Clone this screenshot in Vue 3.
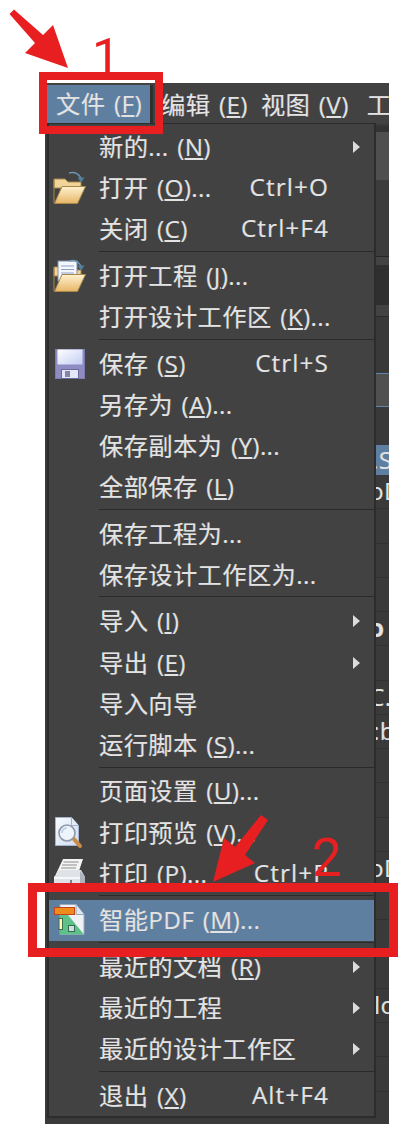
<script setup>
const barItems = [
  { t: "编辑 (", k: "E", a: ")" },
  { t: "视图 (", k: "V", a: ")" },
  { t: "工", k: "", a: "" },
];

// null = separator line
const menu = [
  { t: "新的... (", k: "N", a: ")", sub: true },
  { t: "打开 (", k: "O", a: ")...", key: "Ctrl+O", icon: "open" },
  { t: "关闭 (", k: "C", a: ")", key: "Ctrl+F4" },
  null,
  { t: "打开工程 (", k: "J", a: ")...", icon: "project" },
  { t: "打开设计工作区 (", k: "K", a: ")..." },
  null,
  { t: "保存 (", k: "S", a: ")", key: "Ctrl+S", icon: "save" },
  { t: "另存为 (", k: "A", a: ")..." },
  { t: "保存副本为 (", k: "Y", a: ")..." },
  { t: "全部保存 (", k: "L", a: ")" },
  null,
  { t: "保存工程为..." },
  { t: "保存设计工作区为..." },
  null,
  { t: "导入 (", k: "I", a: ")", sub: true },
  { t: "导出 (", k: "E", a: ")", sub: true },
  { t: "导入向导" },
  { t: "运行脚本 (", k: "S", a: ")..." },
  null,
  { t: "页面设置 (", k: "U", a: ")..." },
  { t: "打印预览 (", k: "V", a: ")...", icon: "preview" },
  { t: "打印 (", k: "P", a: ")...", key: "Ctrl+P", icon: "print" },
  null,
  { t: "智能PDF (", k: "M", a: ")...", icon: "pdf", active: true },
  null,
  { t: "最近的文档 (", k: "R", a: ")", sub: true },
  { t: "最近的工程", sub: true },
  { t: "最近的设计工作区", sub: true },
  null,
  { t: "退出 (", k: "X", a: ")", key: "Alt+F4" },
];

// the bit of the panel that shows to the right of the open menu
const topStrip = [
  { h: 2, bg: "#3a3a3a" },
  { h: 6, bg: "#333333" },
  { h: 48, bg: "#4f4f4f" },
  { h: 76, bg: "#3c3c3c" },
  { h: 1, bg: "#262626" },
  { h: 8, bg: "#434343" },
  { h: 40, bg: "#2f2f2f" },
  { h: 11, bg: "#434343" },
  { h: 1, bg: "#2a2a2a" },
  { h: 56, bg: "#393939" },
  { h: 1, bg: "#5f86ad" },
  { h: 32, bg: "#505050" },
  { h: 1, bg: "#5f86ad" },
  { h: 38, bg: "#393939" },
];

const fileRows = [
  { text: ".S", x: -4, active: true, h: 30 },
  { text: "oD", x: -7 },
  {},
  {},
  {},
  { text: "o", x: -7, bold: true },
  {},
  { text: "C.:", x: -7 },
  { text: ":b", x: -3 },
  {},
  {},
  {},
  { text: "oD", x: -7 },
  {},
  {},
  {},
  { text: "lo", x: -2 },
  {},
  {},
];
</script>

<template>
  <div class="page">
    <div class="window">
      <div class="menubar">
        <div class="bar-item current">文件 (<u>F</u>)</div>
        <div v-for="(item, i) in barItems" :key="i" class="bar-item">
          {{ item.t }}<u v-if="item.k">{{ item.k }}</u>{{ item.a }}
        </div>
      </div>

      <div class="strip">
        <div
          v-for="(s, i) in topStrip"
          :key="i"
          :style="{ height: s.h + 'px', background: s.bg }"
        ></div>
        <div
          v-for="(f, i) in fileRows"
          :key="'f' + i"
          class="file-row"
          :class="{ active: f.active, bold: f.bold }"
          :style="{ height: (f.h || 34.25) + 'px' }"
        >
          <span :style="{ marginLeft: (f.x || 0) + 'px' }">{{ f.text }}</span>
        </div>
      </div>

      <div class="menu">
        <template v-for="(row, i) in menu" :key="i">
          <div v-if="!row" class="sep"></div>
          <div v-else class="row" :class="{ active: row.active }">
            <div class="icon">
              <svg v-if="row.icon === 'open' || row.icon === 'project'" width="34" height="34" viewBox="0 0 34 34">
                <defs>
                  <linearGradient id="folderFront" x1="0" y1="0" x2="0" y2="1">
                    <stop offset="0" stop-color="#fff2cf" />
                    <stop offset="1" stop-color="#e6b566" />
                  </linearGradient>
                </defs>
                <path d="M1 8h11l3 3h13v6H1z" fill="#f0d49a" stroke="#a98748" />
                <rect v-if="row.icon === 'project'" x="5" y="2" width="19" height="20" fill="#f4f6fb" stroke="#7f8fb0" />
                <path v-if="row.icon === 'project'" d="M8 7h13M8 10.500h13M8 14h13" stroke="#8ea0c8" />
                <path d="M1.500 32.500 9 15.500h23.500l-8 17z" fill="url(#folderFront)" stroke="#a98748" />
                <path d="M1 32V9" stroke="#a98748" />
                <path d="M16 2c5-1.500 9 0 12 5" fill="none" stroke="#6d94b3" stroke-width="1.400" />
                <path d="M24.500 6.500h7l-3.500 5z" fill="#557f9f" />
              </svg>
              <svg v-else-if="row.icon === 'save'" width="34" height="34" viewBox="0 0 34 34">
                <defs>
                  <linearGradient id="diskTop" x1="0" y1="0" x2="1" y2="1">
                    <stop offset="0" stop-color="#ffffff" />
                    <stop offset="1" stop-color="#c3cdf2" />
                  </linearGradient>
                </defs>
                <rect x="2.500" y="2.500" width="29" height="29" fill="#8f8cc4" stroke="#7d7ab0" />
                <rect x="4.500" y="2.500" width="25" height="15" fill="url(#diskTop)" />
                <rect x="8.500" y="22.500" width="17" height="9" fill="#e4e7f5" stroke="#6b6a9c" />
                <rect x="12" y="24" width="5" height="6" fill="#7f86a8" />
              </svg>
              <svg v-else-if="row.icon === 'preview'" width="34" height="34" viewBox="0 0 34 34">
                <defs>
                  <linearGradient id="pageFill" x1="0" y1="0" x2="1" y2="1">
                    <stop offset="0" stop-color="#f8fbff" />
                    <stop offset="1" stop-color="#cfdcf0" />
                  </linearGradient>
                </defs>
                <path d="M2.500 1.500h16l7 8v20h-23z" fill="url(#pageFill)" stroke="#a4b3cc" />
                <path d="M18.500 1.500v8h7" fill="#e4ecf8" stroke="#a4b3cc" />
                <path d="m20 22 7 8" stroke="#c98b45" stroke-width="4" stroke-linecap="round" />
                <circle cx="14" cy="17" r="8" fill="#eef4fb" stroke="#8d99a8" stroke-width="1.600" />
                <path d="M9 17c0-3 2-5 5-5" fill="none" stroke="#c3d3e8" stroke-width="2" />
              </svg>
              <svg v-else-if="row.icon === 'print'" width="34" height="34" viewBox="0 0 34 34">
                <path d="M10 2h20l-5 15H3z" fill="#f4f4f4" />
                <path d="M10.500 5h15M9 8h15M8 11h15" stroke="#8e8e8e" />
                <path d="M1 20 6 13h22l4 7v13H1z" fill="#dfe3e8" />
                <path d="M1 20h31v2H1z" fill="#f6f7f9" />
                <path d="M27 14l5 6v13h-5z" fill="#aeb4bc" />
                <rect x="17" y="23" width="2" height="4" fill="#7d7d7d" />
              </svg>
              <svg v-else-if="row.icon === 'pdf'" width="34" height="34" viewBox="0 0 34 34">
                <path d="M7 1.500h16l8 10v20H7z" fill="#eef1f6" stroke="#9aa8bc" />
                <path d="M23 1.500v10h8" fill="#dfe6f0" stroke="#9aa8bc" />
                <path d="M7 12h8l16 19.500H7z" fill="#5fc08a" />
                <rect x="1.500" y="4.500" width="20" height="7" fill="#ef8a1c" stroke="#c2441a" />
                <rect x="6" y="15.500" width="3.500" height="11" fill="#fdf6b4" stroke="#3e6e52" />
                <rect x="15.500" y="22.500" width="6" height="6" fill="#d6dde2" stroke="#2f6d4f" />
              </svg>
            </div>
            <div class="label">{{ row.t }}<u v-if="row.k">{{ row.k }}</u>{{ row.a }}</div>
            <div v-if="row.key" class="shortcut">{{ row.key }}</div>
            <div class="more">
              <span v-if="row.sub" class="caret"></span>
            </div>
          </div>
        </template>
      </div>
    </div>

    <!-- red annotations painted over the screenshot -->
    <div class="mark mark-one"></div>
    <div class="mark mark-two"></div>
    <span class="step step-one">1</span>
    <span class="step step-two">2</span>
    <svg class="arrows" width="406" height="1124" viewBox="0 0 406 1124">
      <path d="M9.500 14 14 9.500 43 35 53 25 68 68 25 53 35 43z" fill="#e71f20" />
      <path d="M261 815 268 820 245 855 255 863 213 882 224 838 235 847z" fill="#e71f20" />
    </svg>
  </div>
</template>

<style scoped>
.page {
  position: relative;
  width: 406px;
  height: 1124px;
  overflow: hidden;
  background: #fff;
  font-family: "Open Sans", "Noto Sans CJK SC", sans-serif;
  font-size: 24.3px;
  letter-spacing: 0.35px;
  word-spacing: 2px;
  color: #e3e3e3;
  text-shadow: -0.5px 0 rgba(90, 170, 255, 0.3), 0.5px 0 rgba(255, 170, 90, 0.3);
}
.window {
  position: absolute;
  left: 45px;
  top: 83px;
  width: 344px;
  height: 1041px;
  background: #3a3a3a;
  overflow: hidden;
}
.menubar {
  display: flex;
  height: 41px;
  background: #424242;
  white-space: nowrap;
  overflow: hidden;
  align-items: center;
  padding-left: 2px;
}
.bar-item {
  margin-right: 13px;
  flex-shrink: 0;
}
.bar-item:nth-child(3) {
  margin-right: 18px;
}
.bar-item.current {
  width: 103px;
  height: 38px;
  line-height: 38px;
  padding-left: 9px;
  margin-right: 11px;
  box-sizing: border-box;
  background: #5f7fa0;
  box-shadow: 3px 0 0 #2f2f2f;
}
.strip {
  margin-left: 331px;
  display: flex;
  flex-direction: column;
  overflow: hidden;
}
.file-row {
  flex-shrink: 0;
  box-sizing: border-box;
  display: flex;
  align-items: center;
  white-space: nowrap;
  border-bottom: 1px solid #313131;
  line-height: 1;
}
.file-row.active {
  background: #5f7fa0;
  border-bottom: 0;
}
.file-row.bold {
  font-weight: 700;
}
.menu {
  position: absolute;
  left: 2px;
  top: 40px;
  width: 329px;
  box-sizing: border-box;
  background: #424242;
  border: 2px solid #2c2c2c;
  border-top-width: 1px;
  padding-top: 2.5px;
  white-space: nowrap;
}
.row {
  display: flex;
  align-items: center;
  height: 41.2px;
  padding-left: 4px;
}
.row.active {
  background: #5f7fa0;
}
.icon {
  width: 34px;
  height: 34px;
  margin-right: 12px;
  flex-shrink: 0;
}
.icon svg {
  display: block;
}
.label {
  flex: 1;
  padding-bottom: 3px;
}
.shortcut {
  letter-spacing: 1.1px;
  margin-right: -1px;
  padding-bottom: 3px;
}
.more {
  width: 46px;
  flex-shrink: 0;
  padding-left: 25px;
  box-sizing: border-box;
  display: flex;
  align-items: center;
}
.caret {
  width: 0;
  height: 0;
  border-left: 7px solid #dcdcdc;
  border-top: 6.500px solid transparent;
  border-bottom: 6.500px solid transparent;
}
.sep {
  height: 5.3px;
  box-sizing: border-box;
  margin-left: 50px;
  padding-top: 1px;
}
.sep::before {
  content: "";
  display: block;
  height: 1px;
  background: #2a2a2a;
}
.mark {
  position: absolute;
  box-sizing: border-box;
  border: 8px solid #e71f20;
}
.mark-one {
  left: 39px;
  top: 72px;
  width: 124px;
  height: 62px;
}
.mark-two {
  left: 28px;
  top: 883px;
  width: 370px;
  height: 74px;
  border-width: 9px;
}
.step {
  position: absolute;
  font-family: Roboto, sans-serif;
  font-weight: 400;
  color: #e71f20;
  line-height: 1;
  text-shadow: none;
  letter-spacing: 0;
}
.step-one {
  left: 92px;
  top: 32px;
  font-size: 50px;
}
.step-two {
  left: 312px;
  top: 832px;
  font-size: 53px;
}
.arrows {
  position: absolute;
  left: 0;
  top: 0;
}
</style>
